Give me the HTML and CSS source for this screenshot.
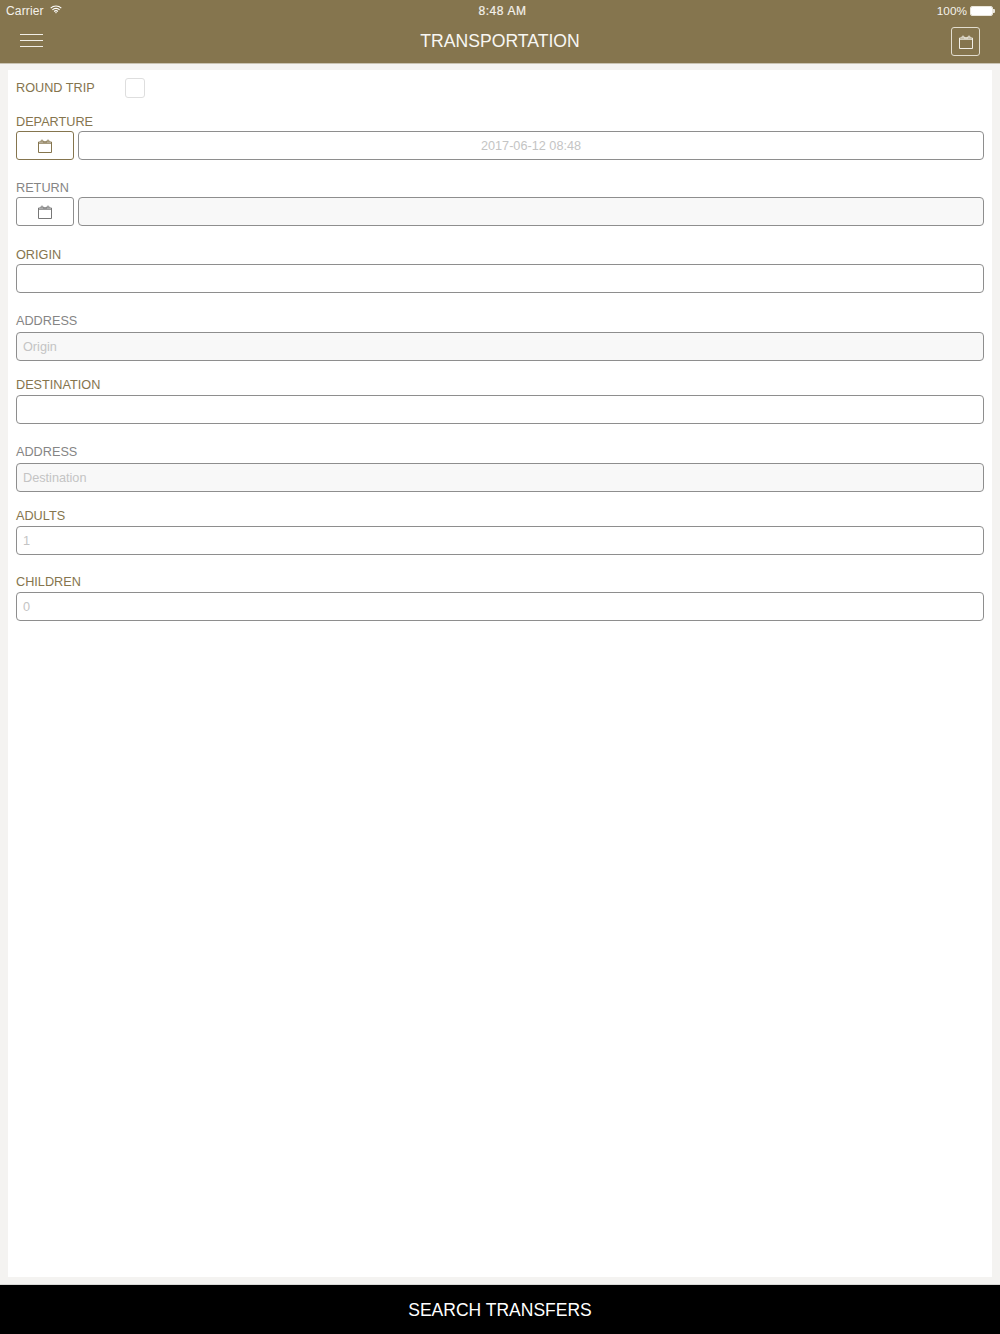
FILE: index.html
```html
<!DOCTYPE html>
<html lang="en">
<head>
<meta charset="utf-8">
<title>Transportation</title>
<link rel="stylesheet" href="styles.css">
</head>
<body>
<svg class="defs" width="0" height="0" aria-hidden="true">
  <symbol id="cal" viewBox="0 0 14 14">
    <path d="M.5 3h13v10.5H.5z" fill="none" stroke="currentColor"/>
    <path d="M.5 4.3h13" fill="none" stroke="currentColor" stroke-width=".9"/>
    <path d="M3 3V2a1 1 0 0 1 2 0v1M9 3V2a1 1 0 0 1 2 0v1" fill="none" stroke="currentColor" stroke-width=".9"/>
    <path d="M5 3h4" stroke="currentColor" stroke-width="1"/>
  </symbol>
</svg>
<div class="app">
  <header class="top">
    <div class="status">
      <div class="status-left">
        <span>Carrier</span>
        <svg class="wifi" viewBox="0 0 14 10" width="12" height="9">
          <path d="M.8 3.4a8.8 8.8 0 0 1 12.4 0M2.8 5.4a6 6 0 0 1 8.4 0M4.8 7.3a3.2 3.2 0 0 1 4.4 0" fill="none" stroke="#fff" stroke-width="1.3"/>
          <path d="M5.9 8.5a1.6 1.6 0 0 1 2.2 0L7 9.8z" fill="#fff"/>
        </svg>
      </div>
      <div class="status-time">8:48 AM</div>
      <div class="status-right">
        <span>100%</span>
        <span class="battery"><span class="battery-fill"></span></span>
        <span class="battery-tip"></span>
      </div>
    </div>
    <div class="nav">
      <button class="menu" type="button" aria-label="Menu"><i></i><i></i><i></i></button>
      <h1 class="title">TRANSPORTATION</h1>
      <button class="nav-cal" type="button" aria-label="Calendar"><svg width="14" height="14"><use href="#cal"/></svg></button>
    </div>
  </header>

  <main class="content">
    <form class="card">
      <div class="round">
        <span class="label gold">ROUND TRIP</span>
        <span class="check"></span>
      </div>

      <div class="field departure">
        <div class="label gold">DEPARTURE</div>
        <div class="picker">
          <span class="cal-btn gold-border"><svg width="14" height="14"><use href="#cal"/></svg></span>
          <div class="input centered">2017-06-12 08:48</div>
        </div>
      </div>

      <div class="field return">
        <div class="label grey">RETURN</div>
        <div class="picker">
          <span class="cal-btn"><svg width="14" height="14"><use href="#cal"/></svg></span>
          <div class="input off"></div>
        </div>
      </div>

      <div class="field origin">
        <div class="label gold">ORIGIN</div>
        <div class="input"></div>
      </div>

      <div class="field address">
        <div class="label grey">ADDRESS</div>
        <div class="input off">Origin</div>
      </div>

      <div class="field dest">
        <div class="label gold">DESTINATION</div>
        <div class="input"></div>
      </div>

      <div class="field address">
        <div class="label grey">ADDRESS</div>
        <div class="input off">Destination</div>
      </div>

      <div class="field adults">
        <div class="label gold">ADULTS</div>
        <div class="input">1</div>
      </div>

      <div class="field">
        <div class="label gold">CHILDREN</div>
        <div class="input">0</div>
      </div>
    </form>
  </main>

  <footer class="foot">SEARCH TRANSFERS</footer>
</div>
</body>
</html>
```

FILE: styles.css
```css
* { box-sizing: border-box; }
html, body { margin: 0; height: 100%; }
body {
  font-family: "Liberation Sans", Arial, sans-serif;
  background: #f4f3f1;
  color: #333;
}
.defs { position: absolute; }
.app { height: 1334px; display: flex; flex-direction: column; overflow: hidden; }

.top {
  height: 64px;
  background: #85754e;
  border-bottom: 1px solid #c9c3b3;
  color: #fff;
  flex: none;
}
.status {
  height: 20px;
  padding: 1px 5px 0 6px;
  display: grid;
  grid-template-columns: 1fr auto 1fr;
  align-items: center;
  font-size: 12px;
  color: #f4f1ea;
}
.status-left { display: flex; align-items: center; gap: 6px; letter-spacing: .15px; }
.wifi { margin-top: -2px; }
.status-time { letter-spacing: .6px; padding-left: 4px; -webkit-text-stroke: .2px #f4f1ea; }
.status-right { display: flex; align-items: center; justify-content: flex-end; font-size: 11.8px; }
.battery {
  width: 23px;
  height: 10px;
  margin-left: 3px;
  border: 1px solid #e9e5da;
  border-radius: 2px;
  display: block;
}
.battery-fill { display: block; height: 100%; background: #fff; border-radius: 1px; }
.battery-tip { width: 2px; height: 4px; background: #e9e5da; border-radius: 0 1px 1px 0; }

.nav {
  height: 43px;
  padding: 0 20px;
  display: flex;
  align-items: center;
  justify-content: space-between;
  position: relative;
}
.menu {
  width: 23px;
  padding: 0;
  margin-top: -3px;
  background: none;
  border: 0;
  display: flex;
  flex-direction: column;
  gap: 5px;
}
.menu i { display: block; height: 1px; background: #f1eee6; }
.title {
  position: absolute;
  left: 0;
  right: 0;
  top: 11px;
  margin: 0;
  text-align: center;
  font-size: 17.6px;
  line-height: 21px;
  font-weight: 400;
  color: #f8f7f3;
  pointer-events: none;
}
.nav-cal {
  width: 29px;
  height: 29px;
  padding: 0;
  color: #f1eee6;
  background: none;
  border: 1px solid #e2ddcf;
  border-radius: 3px;
  display: flex;
  align-items: center;
  justify-content: center;
}

.content { flex: 1; padding: 6px 8px 7px; min-height: 0; }
.card {
  height: 100%;
  background: #fff;
  padding: 8px;
}

.label { font-size: 12.7px; line-height: 16px; height: 16px; padding-top: 1px; display: block; }
.gold { color: #85754e; }
.grey { color: #858585; }

.round { display: flex; align-items: center; height: 20px; margin-bottom: 15px; }
.round .label { width: 109px; padding-top: 0; }
.check {
  width: 20px;
  height: 20px;
  border: 1px solid #dedede;
  border-radius: 3px;
  background: #fff;
}

.field { margin-bottom: 19px; display: flex; flex-direction: column; gap: 2px; }
.return { margin-bottom: 20px; }
.address { gap: 4px; margin-bottom: 15px; }
.dest { gap: 3px; }
.adults { gap: 3px; margin-bottom: 18px; }
.field:last-child { gap: 3px; }

.picker { display: flex; gap: 4px; }
.cal-btn {
  width: 58px;
  height: 29px;
  flex: none;
  border: 1px solid #8e8e8e;
  border-radius: 3px;
  color: #777;
  display: flex;
  align-items: center;
  justify-content: center;
}
.gold-border { border-color: #85754e; color: #85754e; }

.input {
  flex: 1;
  height: 29px;
  border: 1px solid #8e8e8e;
  border-radius: 4px;
  background: #fff;
  padding: 0 6px;
  font-size: 12.7px;
  line-height: 28px;
  color: #c4c4c4;
}
.field > .input { flex: none; }
.centered { text-align: center; }
.off { background: #f8f8f8; }

.foot {
  flex: none;
  height: 50px;
  background: #000;
  border-top: 1px solid #d8d8d6;
  color: #fff;
  text-align: center;
  font-size: 17.5px;
  line-height: 50px;
}
```
